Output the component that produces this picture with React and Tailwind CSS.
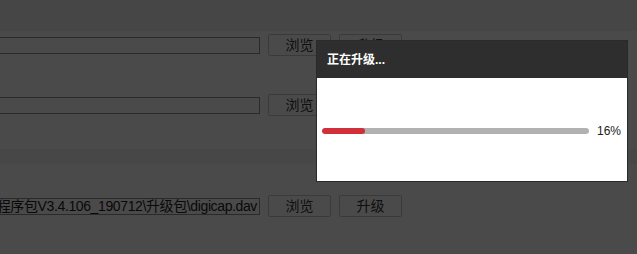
import React from "react";

const font = { fontFamily: '"Liberation Sans", "Noto Sans CJK SC", sans-serif' };

function Btn({ children }) {
  return (
    <div className="w-[63px] h-[22px] flex items-center justify-center border border-[#c4c4c4] rounded-[2px] bg-[#f7f7f7] text-[14px] text-[#333]">
      {children}
    </div>
  );
}

function FileRow({ text, second }) {
  return (
    <div className="flex items-center h-[22px]">
      <div className="w-[262px] -ml-[2px] h-[17px] border border-[#8c8c8c] bg-[#f7f7f7] overflow-hidden flex justify-end items-center pr-[2px]">
        <span className="whitespace-nowrap text-[14px] leading-none tracking-[-0.38px] text-[#222]">{text}</span>
      </div>
      <div className="ml-[8px]"><Btn>浏览</Btn></div>
      {second && <div className="ml-[8px]"><Btn>{second}</Btn></div>}
    </div>
  );
}

export default function App() {
  return (
    <div className="relative w-[637px] h-[254px] overflow-hidden bg-[#f7f7f7]" style={font}>
      <div className="h-[31px] bg-[#ececec]" />
      <div className="pt-[3px]">
        <FileRow text="" second="升级" />
      </div>
      <div className="pt-[38px]">
        <FileRow text="" />
      </div>
      <div className="mt-[33px] h-[15px] bg-[#efefef]" />
      <div className="pt-[31px]">
        <FileRow text="程序包V3.4.106_190712\升级包\digicap.dav" second="升级" />
      </div>

      <div className="absolute inset-0 bg-black/70" />

      <div className="absolute left-[316px] top-[40px] w-[312px] h-[142px] border border-[#2a2a2a] bg-white flex flex-col">
        <div className="h-[37px] bg-[#2e2e2e] flex items-center pl-[10px] text-white text-[12px] font-bold">
          正在升级...
        </div>
        <div className="flex-1 flex items-center pl-[5px] pr-[6px] pt-[2px]">
          <div className="w-[268px] h-[6px] rounded-full bg-[#b1b1b1] overflow-hidden">
            <div className="h-full rounded-full bg-[#d12f39]" style={{ width: "16%" }} />
          </div>
          <span className="ml-[8px] text-[12px] text-[#222]">16%</span>
        </div>
      </div>
    </div>
  );
}
